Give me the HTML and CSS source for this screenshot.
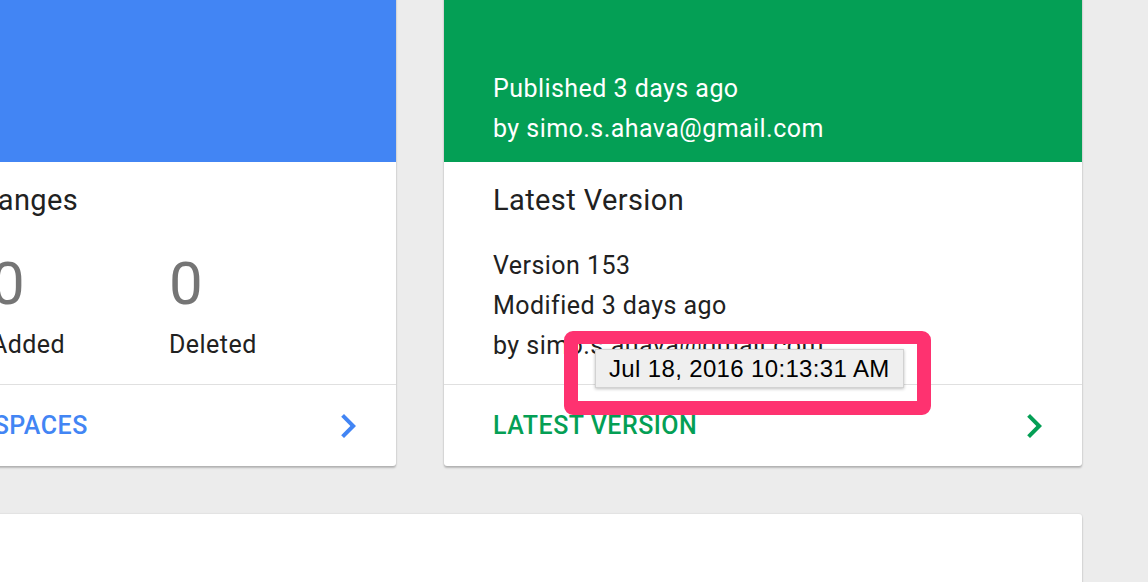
FILE: index.html
```html
<!DOCTYPE html>
<html>
<head>
<meta charset="utf-8">
<link rel="stylesheet" href="styles.css">
</head>
<body>
<div class="page">
  <div class="cards">
    <div class="card">
      <div class="card-header blue">
        <div class="line">&nbsp;</div>
        <div class="line">&nbsp;</div>
      </div>
      <div class="card-body">
        <div class="card-title">Workspace Changes</div>
        <div class="stats">
          <div class="stat stat-modified"><div class="num">0</div><div class="label">Modified</div></div>
          <div class="stat stat-added"><div class="num">0</div><div class="label">Added</div></div>
          <div class="stat"><div class="num">0</div><div class="label">Deleted</div></div>
        </div>
      </div>
      <div class="card-footer">
        <span class="link blue-text">MANAGE WORKSPACES</span>
        <svg class="chev" viewBox="0 0 24 24" width="48" height="48"><path fill="#4285f4" d="M10 6L8.59 7.41 13.17 12l-4.58 4.59L10 18l6-6z"/></svg>
      </div>
    </div>
    <div class="card">
      <div class="card-header green">
        <div class="line">Published 3 days ago</div>
        <div class="line">by simo.s.ahava@gmail.com</div>
      </div>
      <div class="card-body">
        <div class="card-title">Latest Version</div>
        <div class="info">
          <div class="line">Version 153</div>
          <div class="line">Modified 3 days ago</div>
          <div class="line">by simo.s.ahava@gmail.com</div>
        </div>
      </div>
      <div class="card-footer">
        <span class="link green-text">LATEST VERSION</span>
        <svg class="chev" viewBox="0 0 24 24" width="48" height="48"><path fill="#049f55" d="M10 6L8.59 7.41 13.17 12l-4.58 4.59L10 18l6-6z"/></svg>
      </div>
    </div>
  </div>
  <div class="wide-card"></div>
</div>
<div class="highlight"></div>
<div class="tooltip">Jul 18, 2016 10:13:31 AM</div>
</body>
</html>
```
FILE: styles.css
```css
html, body {
  margin: 0;
  padding: 0;
  background: #ececec;
  overflow: hidden;
  width: 1148px;
  height: 582px;
}
body {
  font-family: Roboto, "Liberation Sans", sans-serif;
  color: #212121;
  position: relative;
}
.page {
  margin-left: -242px;
  margin-top: -40px;
  width: 1324px;
}
.cards {
  display: grid;
  grid-template-columns: 638px 638px;
  column-gap: 48px;
}
.card {
  background: #fff;
  border-radius: 3px;
  box-shadow: 0 2px 2px rgba(0,0,0,0.22), 0 0 2px rgba(0,0,0,0.14);
  display: flex;
  flex-direction: column;
  overflow: hidden;
}
.card-header {
  padding: 109px 49px 13px;
  color: #fff;
}
.card-header.blue { background: #4285f4; }
.card-header.green { background: #049f55; }
.line {
  font-size: 25px;
  letter-spacing: 0.45px;
  line-height: 40px;
  white-space: nowrap;
}
.card-body {
  flex: 1;
  padding: 20px 49px 18px;
}
.card-title {
  font-size: 29px;
  letter-spacing: 0.4px;
  line-height: 36px;
  color: #212121;
}
.info {
  margin-top: 28px;
}
.stats {
  display: flex;
  margin-top: 36px;
}
.stat-modified { width: 184px; }
.stat-added { width: 178px; }
.num {
  font-size: 60px;
  line-height: 60px;
  color: #757575;
}
.label {
  margin-top: 11px;
  font-size: 25px;
  letter-spacing: 0.45px;
  line-height: 40px;
}
.card-footer {
  height: 81px;
  border-top: 1px solid #e0e0e0;
  display: flex;
  align-items: center;
  justify-content: space-between;
  padding: 0 24px 0 49px;
}
.link {
  font-size: 25px;
  letter-spacing: 0.5px;
  font-weight: 500;
  white-space: nowrap;
}
.blue-text { color: #4285f4; }
.green-text { color: #049f55; }
.chev { display: block; }
.wide-card {
  margin-top: 48px;
  height: 200px;
  background: #fff;
  border-radius: 3px;
  box-shadow: 0 2px 2px rgba(0,0,0,0.22), 0 0 2px rgba(0,0,0,0.14);
}
.highlight {
  position: absolute;
  left: 564px;
  top: 331px;
  width: 367px;
  height: 84px;
  box-sizing: border-box;
  border: 14px solid #fe3270;
  border-top-width: 13px;
  border-radius: 9px;
}
.tooltip {
  position: absolute;
  left: 595px;
  top: 349px;
  width: 309px;
  height: 39px;
  box-sizing: border-box;
  background: #efefef;
  border: 1px solid #d2d2d2;
  box-shadow: 0 1px 3px rgba(0,0,0,0.25);
  font-family: "Liberation Sans", Arial, sans-serif;
  font-size: 24px;
  letter-spacing: 0.35px;
  line-height: 37px;
  padding-left: 13px;
  color: #000;
  white-space: nowrap;
}
```
